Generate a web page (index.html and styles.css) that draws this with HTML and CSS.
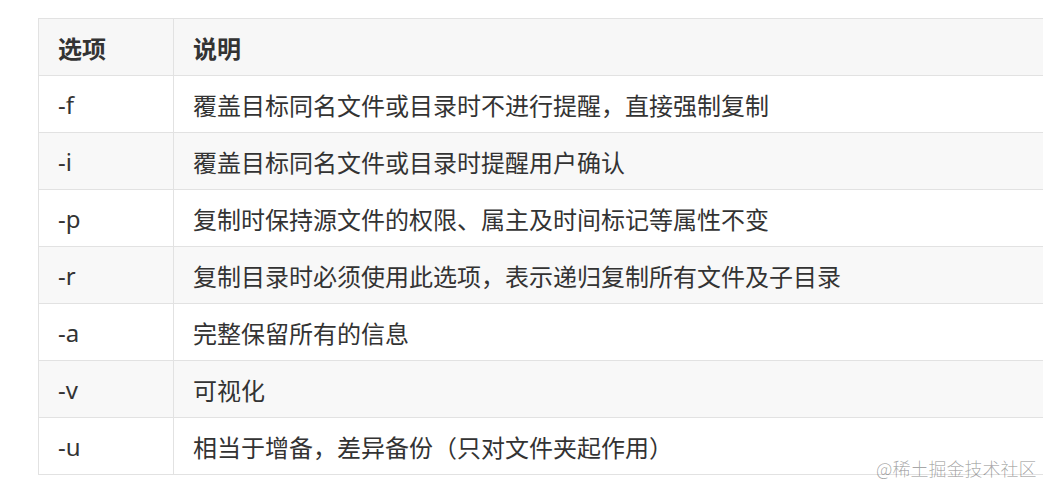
FILE: index.html
```html
<!DOCTYPE html>
<html lang="zh-CN">
<head>
<meta charset="utf-8">
<link rel="stylesheet" href="styles.css">
</head>
<body>
<div class="page">
  <table class="opts">
    <thead>
      <tr><th class="c1">选项</th><th class="c2">说明</th></tr>
    </thead>
    <tbody>
      <tr><td>-f</td><td>覆盖目标同名文件或目录时不进行提醒，直接强制复制</td></tr>
      <tr><td>-i</td><td>覆盖目标同名文件或目录时提醒用户确认</td></tr>
      <tr><td>-p</td><td>复制时保持源文件的权限、属主及时间标记等属性不变</td></tr>
      <tr><td>-r</td><td>复制目录时必须使用此选项，表示递归复制所有文件及子目录</td></tr>
      <tr><td>-a</td><td>完整保留所有的信息</td></tr>
      <tr><td>-v</td><td>可视化</td></tr>
      <tr><td>-u</td><td>相当于增备，差异备份（只对文件夹起作用）</td></tr>
    </tbody>
  </table>
  <div class="watermark">@稀土掘金技术社区</div>
</div>
</body>
</html>
```
FILE: styles.css
```css
html, body {
  margin: 0;
  padding: 0;
  background: #fff;
  overflow: hidden;
}
.page {
  position: relative;
  width: 1043px;
  height: 486px;
  overflow: hidden;
  padding: 18px 0 0 38px;
  box-sizing: border-box;
}
.opts {
  border-collapse: collapse;
  width: 1100px;
  font-family: "Noto Sans", "Noto Sans CJK SC", sans-serif;
  font-size: 24px;
  color: #333;
  table-layout: fixed;
}
.opts th, .opts td {
  border: 1px solid #e2e2e2;
  height: 57px;
  padding: 0 19px;
  text-align: left;
  vertical-align: middle;
  box-sizing: border-box;
  white-space: nowrap;
}
.opts th {
  font-weight: 700;
  background: #f7f7f7;
}
.opts .c1 {
  width: 135px;
}
.opts td {
  font-weight: 400;
}
.opts tbody tr:nth-child(even) td {
  background: #f8f8f8;
}
.watermark {
  position: absolute;
  left: 876px;
  top: 455px;
  font-family: "Noto Sans CJK SC", sans-serif;
  font-size: 18px;
  font-weight: 300;
  color: rgba(0, 0, 0, 0.35);
  white-space: nowrap;
}
```
